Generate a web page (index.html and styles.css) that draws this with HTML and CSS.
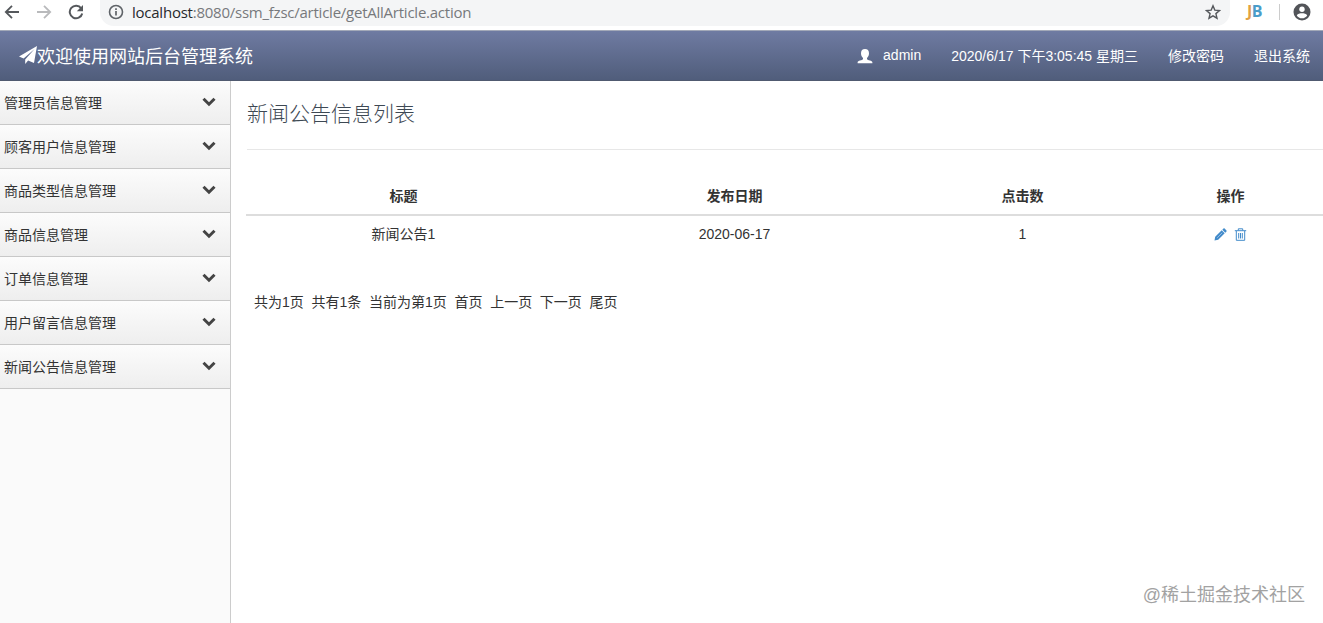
FILE: index.html
```html
<!DOCTYPE html>
<html lang="zh-CN">
<head>
    <meta charset="UTF-8">
    <title>网站后台管理系统</title>
    <link rel="stylesheet" href="styles.css">
</head>
<body>
    <div class="browser-bar">
        <div class="nav-icons">
            <svg width="16" height="16" viewBox="0 0 16 16" fill="none" stroke="#55585c" stroke-width="1.8"><path d="M15 8H2M8 1.8L1.8 8L8 14.2"/></svg>
            <svg width="16" height="16" viewBox="0 0 16 16" fill="none" stroke="#b9babc" stroke-width="1.8"><path d="M1 8H14M8 1.8L14.2 8L8 14.2"/></svg>
            <svg width="16" height="16" viewBox="0 0 16 16"><path d="M13.2 4.3A6.3 6.3 0 1 0 14.2 9.4" fill="none" stroke="#55585c" stroke-width="2"/><path d="M15 1v6.2H8.8z" fill="#55585c"/></svg>
        </div>
        <div class="address">
            <svg width="16" height="16" viewBox="0 0 16 16"><circle cx="8" cy="8" r="6.5" fill="none" stroke="#5f6368" stroke-width="1.6"/><path d="M8 7v4.5M8 4.2v1.7" stroke="#5f6368" stroke-width="1.7"/></svg>
            <span class="url"><b>localhost</b>:8080/ssm_fzsc/article/getAllArticle.action</span>
            <svg class="star" width="16" height="16" viewBox="0 0 16 16"><path d="M8 1.8l1.8 4.3 4.7.4-3.6 3.1 1.1 4.6L8 11.8l-4 2.4 1.1-4.6-3.6-3.1 4.7-.4z" fill="none" stroke="#55585c" stroke-width="1.4"/></svg>
        </div>
        <span class="ext"><span class="ext-j">J</span><span class="ext-b">B</span></span>
        <span class="divider"></span>
        <svg class="profile" width="18" height="18" viewBox="0 0 18 18"><circle cx="9" cy="9" r="8.5" fill="#525459"/><circle cx="9" cy="6.2" r="2.7" fill="#fff"/><path d="M3.8 12.4C4.6 10.6 7 10.2 9 10.2s4.4.4 5.2 2.2C13 14.3 11.2 15.2 9 15.2s-4-.9-5.2-2.8z" fill="#fff"/></svg>
    </div>

    <div class="header">
        <div class="brand">
            <svg width="18" height="18" viewBox="0 0 18 18" fill="#fff"><path d="M18 0L0 10.4l4.6 2L15.600 3 6.200 13.400V18l2.900-3.400 5.900 2.400z"/></svg>
            <span>欢迎使用网站后台管理系统</span>
        </div>
        <div class="top-links">
            <a class="user"><svg width="16" height="15" viewBox="0 0 16 15" fill="#fff"><path d="M8 0c2.6 0 4 1.6 4 4.2 0 1.900-.8 3.700-2 4.700v1.400c.6 1 5.400 1.300 5.400 3.200V14.200H.6v-.7c0-1.900 4.800-2.200 5.400-3.200V8.900c-1.200-1-2-2.800-2-4.700C4 1.600 5.400 0 8 0z"/></svg>admin</a>
            <span>2020/6/17 下午3:05:45 星期三</span>
            <a>修改密码</a>
            <a>退出系统</a>
        </div>
    </div>

    <div class="wrapper">
        <ul class="sidebar">
            <li>管理员信息管理<svg class="chevron" viewBox="0 0 14 10"><path d="M1.500 1.800L7 7.200l5.500-5.400"/></svg></li>
            <li>顾客用户信息管理<svg class="chevron" viewBox="0 0 14 10"><path d="M1.500 1.800L7 7.200l5.500-5.400"/></svg></li>
            <li>商品类型信息管理<svg class="chevron" viewBox="0 0 14 10"><path d="M1.500 1.800L7 7.200l5.500-5.400"/></svg></li>
            <li>商品信息管理<svg class="chevron" viewBox="0 0 14 10"><path d="M1.500 1.800L7 7.200l5.500-5.400"/></svg></li>
            <li>订单信息管理<svg class="chevron" viewBox="0 0 14 10"><path d="M1.500 1.800L7 7.200l5.500-5.400"/></svg></li>
            <li>用户留言信息管理<svg class="chevron" viewBox="0 0 14 10"><path d="M1.500 1.800L7 7.200l5.500-5.400"/></svg></li>
            <li>新闻公告信息管理<svg class="chevron" viewBox="0 0 14 10"><path d="M1.500 1.800L7 7.200l5.500-5.400"/></svg></li>
        </ul>

        <div class="content">
            <h1>新闻公告信息列表</h1>
            <table>
                <colgroup>
                    <col class="col-title">
                    <col class="col-date">
                    <col class="col-hits">
                    <col class="col-action">
                </colgroup>
                <thead>
                    <tr><th>标题</th><th>发布日期</th><th>点击数</th><th>操作</th></tr>
                </thead>
                <tbody>
                    <tr>
                        <td>新闻公告1</td>
                        <td>2020-06-17</td>
                        <td>1</td>
                        <td>
                            <div class="actions">
                                <svg width="13" height="13" viewBox="0 0 13 13" fill="#428bca"><path d="M9.300.7c.5-.5 1-.5 1.500 0l1.500 1.500c.5.5.5 1 0 1.500l-1 1L8.300 1.700zM7.700 2.300l3 3-6.500 6.500L.5 12.500l.7-3.700z"/><path d="M3.200 9.800l5-5" stroke="#a9c9e8" stroke-width=".8"/></svg>
                                <svg width="13" height="13" viewBox="0 0 13 13" fill="none" stroke="#428bca"><path d="M.8 2.700h11.400M4.300 2.500V.8h4.400v1.700M2.300 3v9.300h8.400V3M4.700 5v5.500M6.500 5v5.500M8.300 5v5.500"/></svg>
                            </div>
                        </td>
                    </tr>
                </tbody>
            </table>
            <div class="pager">
                <span>共为1页</span>
                <span>共有1条</span>
                <span>当前为第1页</span>
                <a>首页</a>
                <a>上一页</a>
                <a>下一页</a>
                <a>尾页</a>
            </div>
        </div>
    </div>

    <div class="watermark">@稀土掘金技术社区</div>
</body>
</html>
```

FILE: styles.css
```css
* {
    box-sizing: border-box;
}

body {
    margin: 0;
    height: 623px;
    overflow: hidden;
    display: flex;
    flex-direction: column;
    font-family: "Liberation Sans", "Noto Sans CJK SC", sans-serif;
    font-size: 14px;
    color: #333;
    background: #fff;
}

svg {
    display: block;
    flex: none;
}

/* browser toolbar */
.browser-bar {
    height: 30px;
    flex: none;
    display: flex;
    align-items: flex-start;
    padding-left: 4px;
    background: #fff;
}

.nav-icons {
    display: flex;
    gap: 16px;
    padding-top: 4px;
}

.address {
    width: 1130px;
    height: 26px;
    margin-left: 16px;
    padding: 0 9px 2px 8px;
    display: flex;
    align-items: center;
    background: #f4f5f6;
    border-radius: 0 0 14px 14px;
}

.url {
    margin-left: 8px;
    padding-bottom: 1px;
    font-family: "Open Sans", "Noto Sans", sans-serif;
    font-size: 15px;
    letter-spacing: -0.24px;
    color: #77797c;
}

.url b {
    font-weight: normal;
    color: #27292c;
}

.star {
    margin-left: auto;
}

.ext {
    width: 17px;
    margin-left: 17px;
    font-family: "Open Sans", sans-serif;
    font-size: 16px;
    font-weight: bold;
    line-height: 23px;
    letter-spacing: -0.5px;
}

.ext-j {
    color: #e2a143;
}

.ext-b {
    color: #4a9cc9;
}

.divider {
    width: 1px;
    height: 16px;
    margin: 4px 13px 0 15px;
    background: #ccc;
}

.profile {
    margin-top: 3px;
}

/* top header */
.header {
    height: 51px;
    flex: none;
    display: flex;
    justify-content: space-between;
    align-items: center;
    padding: 0 13px 2px 19px;
    color: #fff;
    border-top: 1px solid #a3a9b8;
    border-bottom: 1px solid #505a70;
    background: linear-gradient(#6f7ba2, #505d7b);
}

.brand {
    display: flex;
    align-items: center;
    font-size: 18px;
}

.top-links {
    display: flex;
    align-items: center;
    gap: 30px;
}

.user {
    display: flex;
    align-items: center;
    gap: 10px;
}

.user svg {
    margin-top: 3px;
}

/* side menu and page */
.wrapper {
    flex: 1;
    display: flex;
}

.sidebar {
    width: 231px;
    flex: none;
    margin: 0;
    padding: 0;
    list-style: none;
    background: #fafafa;
    border-right: 1px solid #ccc;
}

.sidebar li {
    height: 44px;
    padding: 0 14px 2px 4px;
    display: flex;
    justify-content: space-between;
    align-items: center;
    border-bottom: 1px solid #c8c8c8;
    background: linear-gradient(#fcfcfc, #eee);
}

.chevron {
    width: 14px;
    height: 10px;
    fill: none;
    stroke: #444;
    stroke-width: 3;
}

.content {
    flex: 1;
    min-width: 0;
    padding-left: 15px;
}

h1 {
    height: 69px;
    margin: 0 0 0 1px;
    padding-top: 18px;
    font-size: 21px;
    font-weight: 300;
    line-height: 30px;
    color: #3d4853;
    border-bottom: 1px solid #e7e7e7;
}

table {
    width: 1078px;
    margin-top: 27px;
    table-layout: fixed;
    border-collapse: separate;
    border-spacing: 0;
    text-align: center;
}

.col-title {
    width: 315px;
}

.col-date {
    width: 347px;
}

.col-hits {
    width: 229px;
}

.col-action {
    width: 187px;
}

th,
td {
    height: 39px;
    padding: 0;
    line-height: 20px;
}

th {
    border-bottom: 2px solid #ddd;
}

td {
    height: 37px;
    padding-bottom: 2px;
}

.actions {
    display: flex;
    justify-content: center;
    gap: 7px;
    padding-top: 1px;
}

.pager {
    display: flex;
    gap: 7.7px;
    margin-top: 39px;
    padding-left: 8px;
    line-height: 20px;
}

.watermark {
    position: absolute;
    right: 18px;
    bottom: 14px;
    font-size: 18px;
    line-height: 27px;
    color: #a2a2a2;
}
```
